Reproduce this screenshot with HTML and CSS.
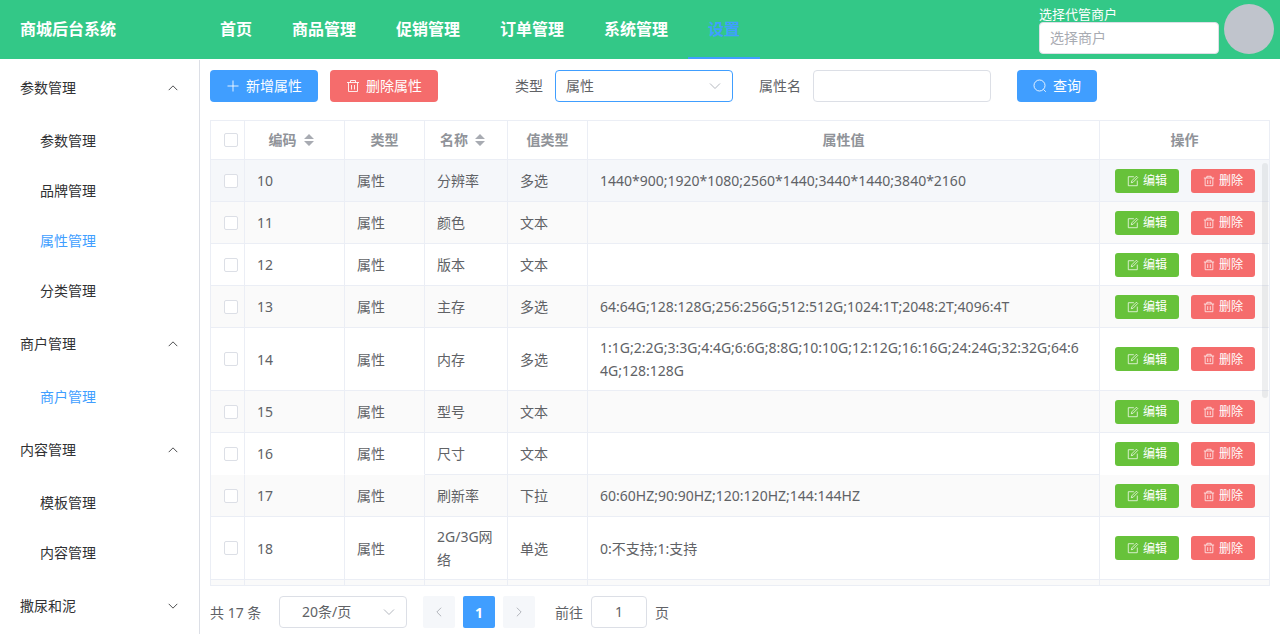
FILE: index.html
```html
<!DOCTYPE html>
<html lang="zh-CN">
<head>
<meta charset="utf-8">
<meta name="viewport" content="width=device-width, initial-scale=1">
<title>商城后台系统</title>
<link rel="stylesheet" href="styles.css">
</head>
<body>
<svg class="sprite" aria-hidden="true">
  <symbol id="plus" viewBox="0 0 14 14"><path d="M7 1.5v11M1.5 7h11"/></symbol>
  <symbol id="trash" viewBox="0 0 14 14"><path d="M1 3.500h12M4.500 3.500v-2h5v2M2.500 3.500v9h9v-9M5.500 6v4.500M8.500 6v4.500"/></symbol>
  <symbol id="edit" viewBox="0 0 14 14"><path d="M8 2H1.500v10.500H12V6.500M5 9l.6-2.200L11 1.400l1.500 1.500L7.200 8.400z"/></symbol>
  <symbol id="search" viewBox="0 0 14 14"><circle cx="6.500" cy="6.500" r="5.500"/><path d="M10.500 10.500l2.300 2.300"/></symbol>
  <symbol id="down" viewBox="0 0 14 14"><path d="M2 4.500l5 5 5-5"/></symbol>
  <symbol id="up" viewBox="0 0 14 14"><path d="M2 9.500l5-5 5 5"/></symbol>
  <symbol id="left" viewBox="0 0 14 14"><path d="M9.500 2l-5 5 5 5"/></symbol>
  <symbol id="right" viewBox="0 0 14 14"><path d="M4.500 2l5 5-5 5"/></symbol>
  <symbol id="sort" viewBox="0 0 10 12"><path d="M0 5l5-5 5 5zM0 7h10l-5 5z"/></symbol>
</svg>

<header class="topbar">
  <div class="brand">商城后台系统</div>
  <nav class="topnav">
    <a href="#">首页</a><a href="#">商品管理</a><a href="#">促销管理</a><a href="#">订单管理</a><a href="#">系统管理</a><a href="#" class="active">设置</a>
  </nav>
  <div class="merchant">
    <label for="merchant">选择代管商户</label>
    <input id="merchant" class="field" type="text" placeholder="选择商户">
  </div>
  <div class="avatar"></div>
</header>

<div class="layout">
  <nav class="sidebar">
    <button class="group" type="button">参数管理<svg class="icon"><use href="#up"/></svg></button>
    <a href="#">参数管理</a>
    <a href="#">品牌管理</a>
    <a href="#" class="active">属性管理</a>
    <a href="#">分类管理</a>
    <button class="group" type="button">商户管理<svg class="icon"><use href="#up"/></svg></button>
    <a href="#" class="active">商户管理</a>
    <button class="group" type="button">内容管理<svg class="icon"><use href="#up"/></svg></button>
    <a href="#">模板管理</a>
    <a href="#">内容管理</a>
    <button class="group" type="button">撒尿和泥<svg class="icon"><use href="#down"/></svg></button>
  </nav>

  <main class="content">
    <div class="toolbar">
      <div class="actions">
        <button class="btn primary" type="button"><svg class="icon"><use href="#plus"/></svg>新增属性</button>
        <button class="btn danger" type="button"><svg class="icon"><use href="#trash"/></svg>删除属性</button>
      </div>
      <form class="filters">
        <div class="filter">
          <label for="type">类型</label>
          <div class="select">
            <select id="type" class="field focused"><option>属性</option></select>
            <svg class="icon"><use href="#down"/></svg>
          </div>
        </div>
        <div class="filter">
          <label for="name">属性名</label>
          <input id="name" class="field" type="text">
        </div>
        <button class="btn primary" type="button"><svg class="icon"><use href="#search"/></svg>查询</button>
      </form>
    </div>

    <div class="table-box">
      <div class="table-scroll">
        <table>
          <colgroup><col class="c-check"><col class="c-code"><col class="c-type"><col class="c-name"><col class="c-kind"><col><col class="c-ops"></colgroup>
          <thead>
            <tr>
              <th class="check"><input type="checkbox" aria-label="全选"></th>
              <th>编码<svg class="sort"><use href="#sort"/></svg></th>
              <th>类型</th>
              <th>名称<svg class="sort"><use href="#sort"/></svg></th>
              <th>值类型</th>
              <th>属性值</th>
              <th>操作</th>
            </tr>
          </thead>
          <tbody id="rows"></tbody>
        </table>
      </div>
      <div class="thumb"></div>
    </div>

    <div class="pagination">
      <span class="total">共 17 条</span>
      <div class="select size">
        <select class="field" aria-label="每页条数"><option>20条/页</option></select>
        <svg class="icon"><use href="#down"/></svg>
      </div>
      <div class="pages">
        <button type="button" aria-label="上一页"><svg class="icon"><use href="#left"/></svg></button>
        <button type="button" class="current">1</button>
        <button type="button" aria-label="下一页"><svg class="icon"><use href="#right"/></svg></button>
      </div>
      <div class="jump">
        <label for="page">前往</label>
        <input id="page" class="field" type="text" value="1">
        <span>页</span>
      </div>
    </div>
  </main>
</div>
<script src="rows.js"></script>
</body>
</html>
```
FILE: styles.css
```css
* { box-sizing: border-box; }

body {
  margin: 0;
  height: 100vh;
  display: flex;
  flex-direction: column;
  padding-bottom: 6px;
  background: #fff;
  color: #606266;
  font: 14px/23px "Noto Sans", "Noto Sans CJK SC", sans-serif;
}

a { text-decoration: none; }
button, input, select { font: inherit; color: inherit; margin: 0; }
button { border: 0; cursor: pointer; }
.sprite { position: absolute; width: 0; height: 0; }

.icon {
  width: 14px;
  height: 14px;
  flex: none;
  fill: none;
  stroke: currentColor;
  stroke-width: 1;
}

.field {
  height: 32px;
  padding: 0 10px 2px;
  border: 1px solid #dcdfe6;
  border-radius: 4px;
  background: #fff;
  outline: 0;
}
.field::placeholder { color: #a8abb2; opacity: 1; }
.field.focused { border-color: #409eff; }

.select { position: relative; }
.select select { width: 100%; appearance: none; }
.select .icon {
  position: absolute;
  right: 11px;
  top: 9px;
  color: #b4b8bf;
  pointer-events: none;
}

/* top bar */
.topbar {
  display: flex;
  flex: none;
  height: 59px;
  margin-bottom: 1px;
  padding-right: 6px;
  background: #33c887;
  color: #fff;
}
.brand {
  width: 200px;
  padding-left: 20px;
  font-size: 16px;
  font-weight: 700;
  line-height: 59px;
}
.topnav { display: flex; flex: 1; }
.topnav a {
  padding: 0 20px;
  color: #fff;
  font-size: 16px;
  font-weight: 700;
  line-height: 59px;
}
.topnav .active { color: #409eff; box-shadow: inset 0 -2px #409eff; }
.merchant {
  display: flex;
  flex-direction: column;
  width: 180px;
  padding-top: 6px;
  margin-right: 5px;
  font-size: 13px;
  line-height: 16px;
}
.merchant .field { font-size: 14px; }
.avatar {
  width: 50px;
  height: 50px;
  margin-top: 4px;
  border-radius: 50%;
  background: #c0c4cc;
}

/* page body */
.layout { display: flex; flex: 1; min-height: 0; }
.sidebar {
  width: 200px;
  flex: none;
  overflow: hidden;
  border-right: 1px solid #dcdfe6;
  color: #303133;
}
.sidebar .group {
  display: flex;
  align-items: center;
  justify-content: space-between;
  width: 100%;
  height: 56px;
  padding: 0 20px 1px;
  background: none;
}
.sidebar .group .icon { width: 12px; height: 12px; }
.sidebar a {
  display: block;
  padding-left: 40px;
  color: #303133;
  line-height: 50px;
}
.sidebar .active { color: #409eff; }

.content {
  display: flex;
  flex: 1;
  flex-direction: column;
  min-width: 0;
  padding: 10px 10px 6px;
}

.toolbar { display: flex; gap: 77px; margin-bottom: 18px; }
.actions { display: flex; gap: 12px; }
.filters { display: flex; gap: 26px; }
.filter { display: flex; align-items: center; gap: 12px; }
.filter label { padding-bottom: 2px; }
.filter .select, .filter > .field { width: 178px; }

.btn {
  display: inline-flex;
  align-items: center;
  gap: 6px;
  height: 32px;
  padding: 0 16px 1px;
  border-radius: 4px;
  color: #fff;
  white-space: nowrap;
}
.primary { background: #409eff; }
.success { background: #67c23a; }
.danger { background: #f56c6c; }
.btn .icon { stroke-opacity: 0.85; }
.btn.mini { height: 24px; padding: 0 12px; gap: 4px; border-radius: 3px; font-size: 12px; }
.mini .icon { width: 12px; height: 12px; }

/* attribute table */
.table-box {
  position: relative;
  flex: 1;
  min-height: 0;
  border: 1px solid #ebeef5;
}
.table-scroll { height: 100%; overflow: auto; scrollbar-width: none; }
.thumb {
  position: absolute;
  top: 42px;
  right: 1px;
  width: 6px;
  height: 235px;
  border-radius: 3px;
  background: rgba(144, 147, 153, 0.15);
}

table {
  width: 100%;
  table-layout: fixed;
  border-collapse: separate;
  border-spacing: 0;
}
.c-check { width: 34px; }
.c-code { width: 100px; }
.c-type, .c-kind { width: 80px; }
.c-name { width: 83px; }
.c-ops { width: 169px; }

th, td {
  border-right: 1px solid #ebeef5;
  border-bottom: 1px solid #ebeef5;
  word-break: break-all;
}
th:last-child, td:last-child { border-right: 0; }
th {
  position: sticky;
  top: 0;
  height: 39px;
  padding: 0 0 2px;
  background: #fff;
  color: #909399;
  text-align: center;
}
td { height: 42px; padding: 8px 12px; }
td.values { padding-right: 16px; }
tbody tr:nth-child(even) td { background: #fafafa; }
tbody tr.hover td { background: #f5f7fa; }
tbody td.seamless { border-bottom-color: transparent; }
.sort {
  width: 10px;
  height: 12px;
  margin: 0 7px;
  fill: #a8abb2;
  vertical-align: -1px;
}
.check, td.check { padding: 0 0 0 6px; text-align: center; }
.check input {
  display: block;
  appearance: none;
  width: 14px;
  height: 14px;
  margin: 0 auto;
  border: 1px solid #dcdfe6;
  border-radius: 2px;
  background: #fff;
}
td.ops { padding: 0 15px; }
.ops div { display: flex; gap: 12px; }

/* pagination */
.pagination { display: flex; align-items: center; gap: 16px; margin-top: 10px; }
.total { min-width: 53px; }
.size { width: 128px; }
.size select { padding: 0 22px 2px; }
.pages { display: flex; gap: 8px; }
.pages button {
  display: flex;
  align-items: center;
  justify-content: center;
  width: 32px;
  height: 32px;
  padding: 0;
  border-radius: 2px;
  background: #f5f7fa;
  color: #a8abb2;
}
.pages .icon { width: 12px; height: 12px; }
.pages .current { background: #409eff; color: #fff; font-weight: 700; }
.jump { display: flex; align-items: center; gap: 8px; margin-left: 4px; }
.jump .field { width: 56px; text-align: center; }
```
FILE: rows.js
```js
const rows = [
  [10, "分辨率", "多选", "1440*900;1920*1080;2560*1440;3440*1440;3840*2160"],
  [11, "颜色", "文本", ""],
  [12, "版本", "文本", ""],
  [13, "主存", "多选", "64:64G;128:128G;256:256G;512:512G;1024:1T;2048:2T;4096:4T"],
  [14, "内存", "多选", "1:1G;2:2G;3:3G;4:4G;6:6G;8:8G;10:10G;12:12G;16:16G;24:24G;32:32G;64:64G;128:128G"],
  [15, "型号", "文本", ""],
  [16, "尺寸", "文本", ""],
  [17, "刷新率", "下拉", "60:60HZ;90:90HZ;120:120HZ;144:144HZ"],
  [18, "2G/3G网络", "单选", "0:不支持;1:支持"]
];

const button = (kind, icon, text) =>
  `<button class="btn mini ${kind}" type="button"><svg class="icon"><use href="#${icon}"/></svg>${text}</button>`;

document.getElementById("rows").innerHTML = rows.map(([id, name, kind, values], i) => {
  const fixed = id === 16 ? " seamless" : "";
  return `<tr class="${i === 0 ? "hover" : ""}">
    <td class="check${fixed}"><input type="checkbox" aria-label="选择 ${id}"></td>
    <td class="${fixed}">${id}</td>
    <td class="${fixed}">属性</td>
    <td>${name}</td>
    <td>${kind}</td>
    <td class="values">${values}</td>
    <td class="ops${fixed}"><div>${button("success", "edit", "编辑")}${button("danger", "trash", "删除")}</div></td>
  </tr>`;
}).join("") + `<tr>${"<td></td>".repeat(7)}</tr>`;
```
